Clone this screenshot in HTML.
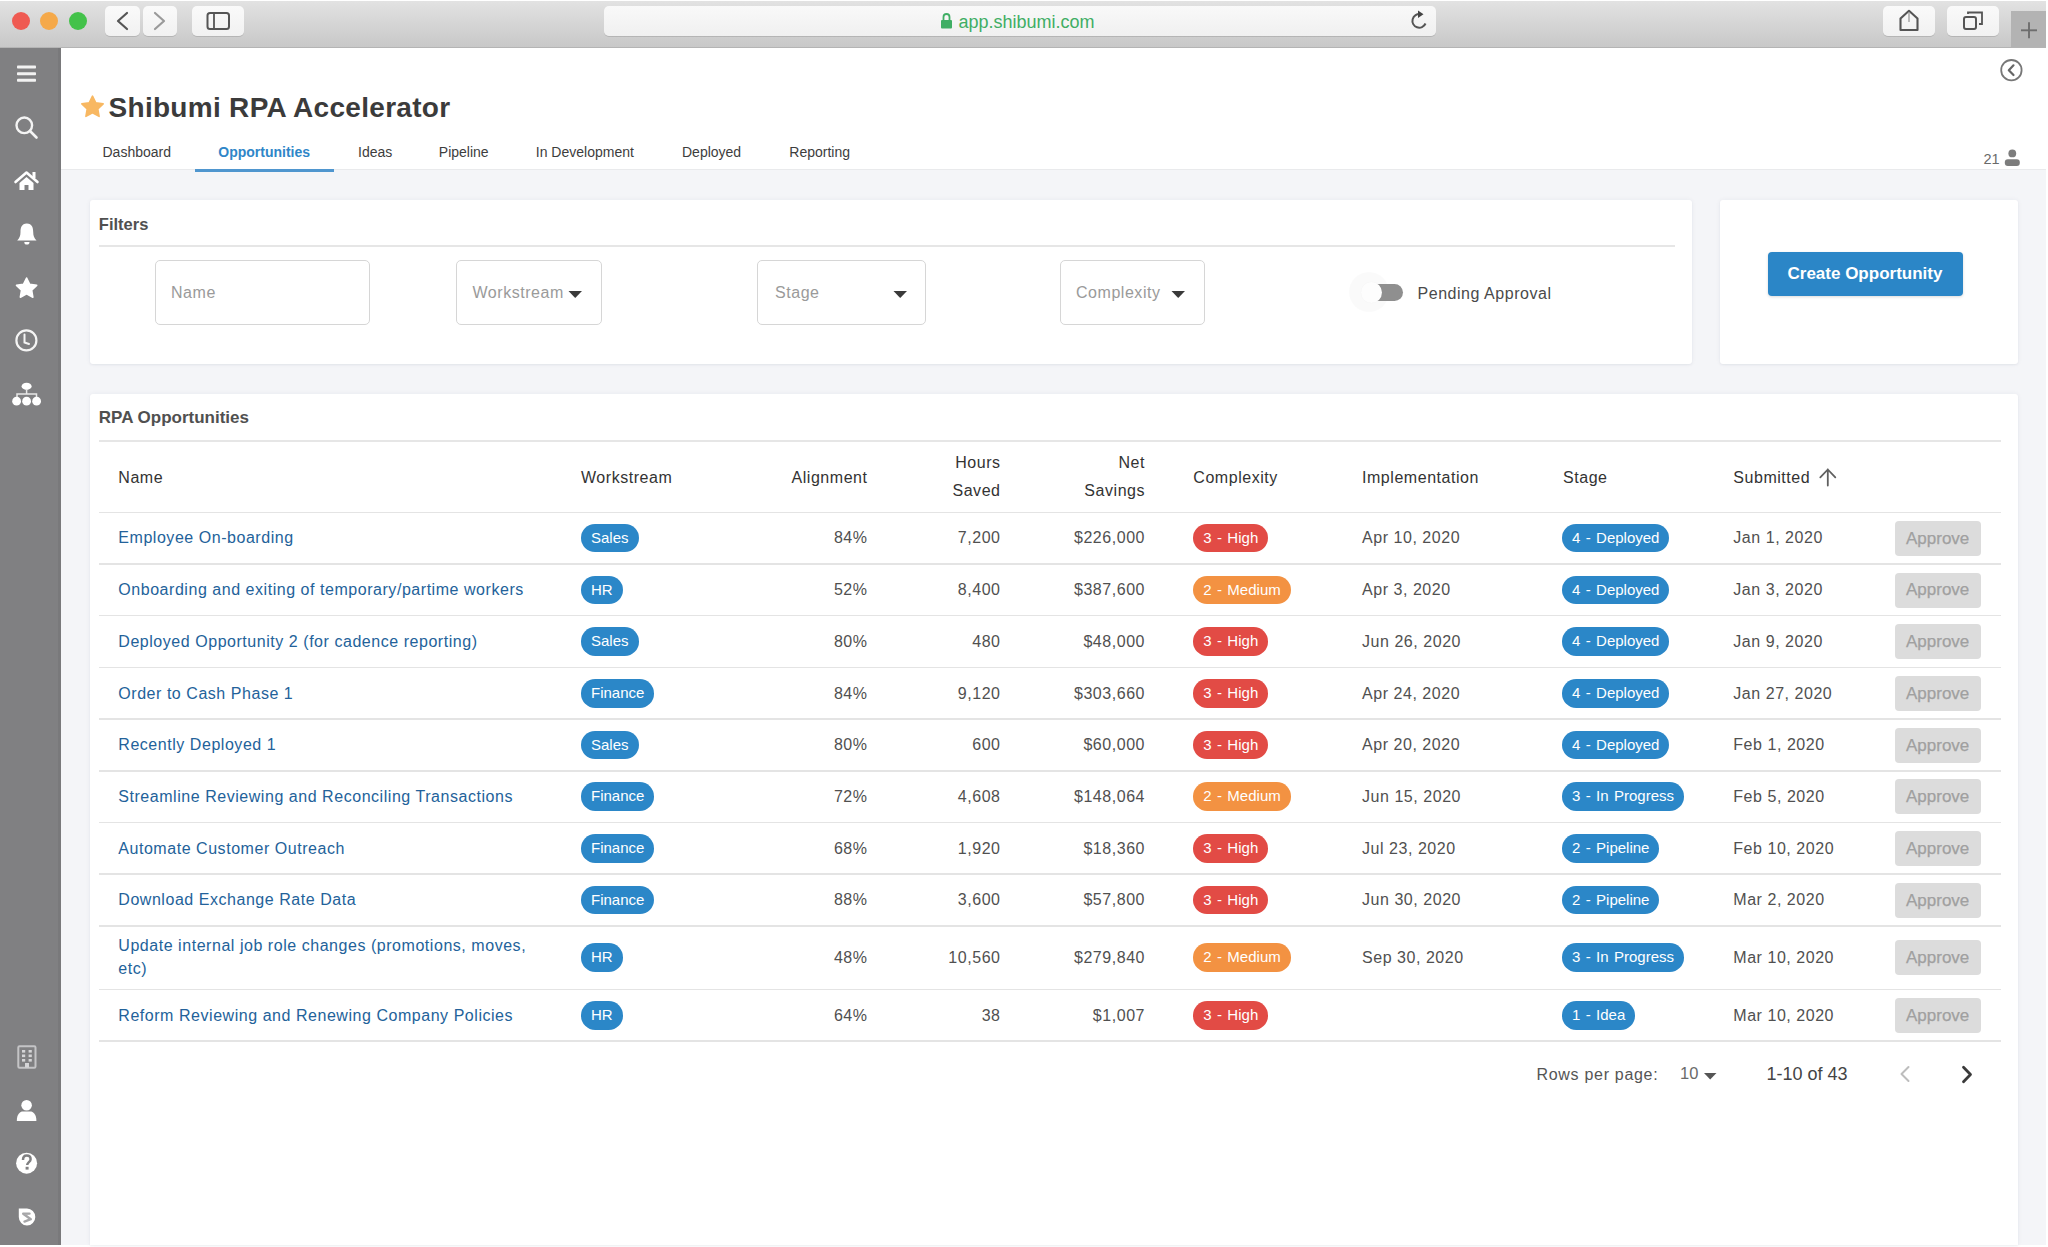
<!DOCTYPE html>
<html><head><meta charset="utf-8">
<style>
*{margin:0;padding:0;box-sizing:border-box}
html,body{width:2048px;height:1247px;overflow:hidden;background:#fff;font-family:"Liberation Sans", sans-serif;}
.a{position:absolute}
.t{position:absolute;white-space:nowrap}
svg{position:absolute;overflow:visible}
</style></head><body>

<div class="a" style="left:0px;top:1px;width:2046px;height:46px;background:linear-gradient(#e2e2e2,#c8c8c8);"></div>
<div class="a" style="left:0px;top:46.5px;width:2046px;height:1.5px;background:#b4b4b4;"></div>
<div class="a" style="left:11.5px;top:12px;width:18px;height:18px;border-radius:50%;background:#ef5a52;"></div>
<div class="a" style="left:40.2px;top:12px;width:18px;height:18px;border-radius:50%;background:#f5a94a;"></div>
<div class="a" style="left:68.8px;top:12px;width:18px;height:18px;border-radius:50%;background:#43c24a;"></div>
<div class="a" style="left:105px;top:6px;width:35px;height:30px;background:linear-gradient(#fafafa,#f1f1f1);border-radius:5px;box-shadow:0 1px 0 rgba(0,0,0,0.12);"></div>
<div class="a" style="left:143px;top:6px;width:34px;height:30px;background:linear-gradient(#fafafa,#f1f1f1);border-radius:5px;box-shadow:0 1px 0 rgba(0,0,0,0.12);"></div>
<div class="a" style="left:192px;top:6px;width:52px;height:30px;background:linear-gradient(#fafafa,#f1f1f1);border-radius:5px;box-shadow:0 1px 0 rgba(0,0,0,0.12);"></div>
<svg style="left:0;top:0" width="2048" height="47"><polyline points="127,13 118,21 127,29" fill="none" stroke="#555" stroke-width="2.2" stroke-linecap="round" stroke-linejoin="round"/><polyline points="155,13 164,21 155,29" fill="none" stroke="#9a9a9a" stroke-width="2.2" stroke-linecap="round" stroke-linejoin="round"/><rect x="207.5" y="13" width="21.5" height="16" rx="2.5" fill="none" stroke="#555" stroke-width="2"/><line x1="214" y1="13" x2="214" y2="29" stroke="#555" stroke-width="1.8"/></svg>
<div class="a" style="left:604px;top:6px;width:832px;height:30px;background:linear-gradient(#f9f9f9,#f0f0f0);border-radius:5px;box-shadow:0 1px 0 rgba(0,0,0,0.12);"></div>
<svg style="left:0;top:0" width="2048" height="47"><path d="M943.5,20 v-3 a3,3 0 0 1 6,0 v3" fill="none" stroke="#3fae64" stroke-width="1.8"/><rect x="941" y="20" width="11" height="8.5" rx="1" fill="#3fae64"/></svg>
<div class="t" style="left:958.50px;top:11.71px;font-size:18px;line-height:20.11px;color:#3fae64;font-weight:normal;">app.shibumi.com</div>
<svg style="left:0;top:0" width="2048" height="47"><path d="M1425.5,23.5 A6.8,6.8 0 1 1 1420.5,14.2" fill="none" stroke="#555" stroke-width="2"/><path d="M1418,10.5 L1423.5,14.2 L1418,18 Z" fill="#444"/></svg>
<div class="a" style="left:1883px;top:6px;width:52px;height:30px;background:linear-gradient(#fafafa,#f1f1f1);border-radius:5px;box-shadow:0 1px 0 rgba(0,0,0,0.12);"></div>
<div class="a" style="left:1947px;top:6px;width:52px;height:30px;background:linear-gradient(#fafafa,#f1f1f1);border-radius:5px;box-shadow:0 1px 0 rgba(0,0,0,0.12);"></div>
<svg style="left:0;top:0" width="2048" height="47"><path d="M1909,10.8 L1900.5,18.5 L1900.5,30 L1917.5,30 L1917.5,18.5 Z" fill="none" stroke="#555" stroke-width="2.1" stroke-linejoin="round"/><line x1="1909" y1="13" x2="1909" y2="22" stroke="#9a9a9a" stroke-width="1.3"/><rect x="1964" y="17" width="12" height="12" rx="2" fill="none" stroke="#555" stroke-width="2"/><path d="M1968,14 L1968,12.5 L1982,12.5 L1982,24 L1979,24" fill="none" stroke="#555" stroke-width="1.8"/></svg>
<div class="a" style="left:2011px;top:11px;width:35px;height:36px;background:#b3b3b3;"></div>
<svg style="left:0;top:0" width="2048" height="47"><line x1="2021" y1="30.3" x2="2037" y2="30.3" stroke="#6e6e6e" stroke-width="1.9"/><line x1="2029" y1="22.3" x2="2029" y2="38.3" stroke="#6e6e6e" stroke-width="1.9"/></svg>
<div class="a" style="left:0px;top:48px;width:61px;height:1197px;background:#808082;"></div>
<div class="a" style="left:58px;top:48px;width:3px;height:1197px;background:#79797b;"></div>
<div class="a" style="left:61px;top:48px;width:1985px;height:122px;background:#fff;"></div>
<div class="a" style="left:61px;top:170px;width:1985px;height:1075px;background:#f4f5f8;"></div>
<div class="a" style="left:61px;top:169px;width:1985px;height:1px;background:#e9eaec;"></div>
<svg style="left:0;top:0" width="60" height="1247"><rect x="17" y="65.5" width="19" height="3" rx="0.8" fill="#f2f2f2"/><rect x="17" y="72.3" width="19" height="3" rx="0.8" fill="#f2f2f2"/><rect x="17" y="78.8" width="19" height="3" rx="0.8" fill="#f2f2f2"/><circle cx="24.3" cy="125.3" r="7.8" fill="none" stroke="#f4f4f4" stroke-width="2.4"/><line x1="30" y1="131" x2="36.5" y2="137.5" stroke="#f4f4f4" stroke-width="2.6" stroke-linecap="round"/><path d="M15.5,182 L26.5,172.5 L37.5,182" fill="none" stroke="#fff" stroke-width="2.6" stroke-linecap="round" stroke-linejoin="round"/><rect x="32.5" y="172" width="3" height="6" fill="#fff"/><path d="M19.5,183 L26.5,177 L33.5,183 L33.5,190 L28.5,190 L28.5,185 L24.5,185 L24.5,190 L19.5,190 Z" fill="#fff"/><path d="M26.8,223.5 C21.5,223.5 20.5,228 20.5,232 C20.5,236 19.5,238 17.2,240.5 L36.5,240.5 C34.2,238 33.2,236 33.2,232 C33.2,228 32.2,223.5 26.8,223.5 Z" fill="#fff"/><path d="M24.3,242 a2.6,2.6 0 0 0 5.2,0 Z" fill="#fff"/><path d="M26.60,278.00 L29.72,284.31 L36.68,285.32 L31.64,290.24 L32.83,297.18 L26.60,293.90 L20.37,297.18 L21.56,290.24 L16.52,285.32 L23.48,284.31 Z" fill="#fff" stroke="#fff" stroke-width="1.6" stroke-linejoin="round"/><circle cx="26.4" cy="340.4" r="10" fill="none" stroke="#f4f4f4" stroke-width="2.2"/><path d="M24.5,334.5 L24.5,342.5 L29,344" fill="none" stroke="#f4f4f4" stroke-width="2" stroke-linecap="round"/><ellipse cx="26.6" cy="386.3" rx="5" ry="3.6" fill="#fff"/><path d="M26.6,389 L26.6,394 M17,398 L17,394 L36.5,394 L36.5,398" fill="none" stroke="#e8e8e8" stroke-width="1.5"/><circle cx="16.6" cy="401.2" r="4.4" fill="#fff"/><circle cx="26.6" cy="401.2" r="4.4" fill="#fff"/><circle cx="36.6" cy="401.2" r="4.4" fill="#fff"/><rect x="18.3" y="1046.3" width="17.2" height="21.5" rx="1.2" fill="none" stroke="#c4c4c6" stroke-width="2"/><g fill="#d4d4d6"><rect x="22" y="1050" width="3.2" height="2.6"/><rect x="28.6" y="1050" width="3.2" height="2.6"/><rect x="22" y="1054.5" width="3.2" height="2.6"/><rect x="28.6" y="1054.5" width="3.2" height="2.6"/><rect x="22" y="1059" width="3.2" height="2.6"/><rect x="28.6" y="1059" width="3.2" height="2.6"/><rect x="25" y="1063" width="4" height="4.5"/></g><circle cx="26.6" cy="1105.3" r="5.3" fill="#fff"/><path d="M16.8,1121 C16.8,1114 20,1111.5 23,1111.5 L30.2,1111.5 C33.2,1111.5 36.4,1114 36.4,1121 Z" fill="#fff"/><circle cx="26.6" cy="1163.2" r="10.5" fill="#fff"/><path d="M23,1160 C23,1156.5 25,1155.5 26.8,1155.5 C29,1155.5 30.6,1157 30.6,1159.2 C30.6,1162 27.2,1162.2 27.2,1165" fill="none" stroke="#808082" stroke-width="2.5"/><rect x="25.6" y="1166.8" width="3" height="2.8" fill="#808082"/><path d="M18.8,1208.4 L27,1208.4 A8.3,8.6 0 0 1 35.3,1217 A8.3,8.6 0 0 1 27,1225.6 A8.2,8.6 0 0 1 18.8,1217 Z" fill="#fff"/><path d="M29.5,1213.6 L23.2,1213.8 L30.8,1219.2 L24.5,1221.6" fill="none" stroke="#a6a6a8" stroke-width="2.4" stroke-linejoin="round" stroke-linecap="round"/></svg>
<svg style="left:0;top:0" width="120" height="130"><path d="M92.50,96.10 L95.79,102.77 L103.15,103.84 L97.83,109.03 L99.08,116.36 L92.50,112.90 L85.92,116.36 L87.17,109.03 L81.85,103.84 L89.21,102.77 Z" fill="#f8b862" stroke="#f8b862" stroke-width="1.6" stroke-linejoin="round"/></svg>
<div class="t" style="left:108.50px;top:92.16px;font-size:28px;line-height:31.28px;color:#3b3b3b;font-weight:bold;letter-spacing:0.3px;">Shibumi RPA Accelerator</div>
<div class="t" style="left:102.50px;top:145.33px;font-size:14px;line-height:15.64px;color:#3d3d3d;font-weight:normal;">Dashboard</div>
<div class="t" style="left:218.30px;top:145.33px;font-size:14px;line-height:15.64px;color:#2f86c8;font-weight:bold;">Opportunities</div>
<div class="t" style="left:358.00px;top:145.33px;font-size:14px;line-height:15.64px;color:#3d3d3d;font-weight:normal;">Ideas</div>
<div class="t" style="left:438.80px;top:145.33px;font-size:14px;line-height:15.64px;color:#3d3d3d;font-weight:normal;">Pipeline</div>
<div class="t" style="left:535.80px;top:145.33px;font-size:14px;line-height:15.64px;color:#3d3d3d;font-weight:normal;">In Development</div>
<div class="t" style="left:682.00px;top:145.33px;font-size:14px;line-height:15.64px;color:#3d3d3d;font-weight:normal;">Deployed</div>
<div class="t" style="left:789.30px;top:145.33px;font-size:14px;line-height:15.64px;color:#3d3d3d;font-weight:normal;">Reporting</div>
<div class="a" style="left:195px;top:168.5px;width:139px;height:3px;background:#4f96cf;"></div>
<svg style="left:0;top:0" width="2048" height="200"><circle cx="2011.4" cy="70.2" r="10.2" fill="none" stroke="#777" stroke-width="1.8"/><polyline points="2013.5,65.3 2008.8,70.2 2013.5,75" fill="none" stroke="#666" stroke-width="2.2" stroke-linecap="round" stroke-linejoin="round"/><circle cx="2012.3" cy="153.4" r="3.9" fill="#7c7c7c"/><rect x="2004.8" y="159.2" width="15" height="6.8" rx="3" fill="#7c7c7c"/></svg>
<div class="t" style="left:1983.50px;top:151.48px;font-size:14.5px;line-height:16.20px;color:#6a6a6a;font-weight:normal;">21</div>
<div class="a" style="left:90px;top:199.5px;width:1602px;height:164px;background:#fff;border-radius:3px;box-shadow:0 0 5px rgba(40,50,80,0.06), 0 1px 2px rgba(40,50,80,0.05);"></div>
<div class="a" style="left:1720px;top:199.5px;width:298px;height:164px;background:#fff;border-radius:3px;box-shadow:0 0 5px rgba(40,50,80,0.06), 0 1px 2px rgba(40,50,80,0.05);"></div>
<div class="t" style="left:98.80px;top:214.57px;font-size:16.5px;line-height:18.43px;color:#505050;font-weight:bold;">Filters</div>
<div class="a" style="left:99px;top:245px;width:1576px;height:1.5px;background:#e6e6e6;"></div>
<div class="a" style="left:154.5px;top:260px;width:215px;height:64.5px;border:1.6px solid #d6d6d6;border-radius:5px;background:#fff;"></div>
<div class="t" style="left:171.00px;top:284.02px;font-size:16px;line-height:17.87px;color:#9a9a9a;font-weight:normal;letter-spacing:0.54px;">Name</div>
<div class="a" style="left:456px;top:260px;width:145.5px;height:64.5px;border:1.6px solid #d6d6d6;border-radius:5px;background:#fff;"></div>
<div class="t" style="left:472.50px;top:284.02px;font-size:16px;line-height:17.87px;color:#9a9a9a;font-weight:normal;letter-spacing:0.54px;">Workstream</div>
<div class="a" style="left:757px;top:260px;width:169px;height:64.5px;border:1.6px solid #d6d6d6;border-radius:5px;background:#fff;"></div>
<div class="t" style="left:775.00px;top:284.02px;font-size:16px;line-height:17.87px;color:#9a9a9a;font-weight:normal;letter-spacing:0.54px;">Stage</div>
<div class="a" style="left:1059.5px;top:260px;width:145.5px;height:64.5px;border:1.6px solid #d6d6d6;border-radius:5px;background:#fff;"></div>
<div class="t" style="left:1076.00px;top:284.02px;font-size:16px;line-height:17.87px;color:#9a9a9a;font-weight:normal;letter-spacing:0.54px;">Complexity</div>
<svg style="left:0;top:0" width="2048" height="400"><path d="M568.5,291 L582,291 L575.2,298 Z" fill="#3a3a3a"/><path d="M893.5,291 L907,291 L900.2,298 Z" fill="#3a3a3a"/><path d="M1171.5,291 L1185,291 L1178.2,298 Z" fill="#3a3a3a"/></svg>
<div class="a" style="left:1349px;top:272px;width:40px;height:40px;border-radius:50%;background:rgba(0,0,0,0.018);"></div>
<div class="a" style="left:1366px;top:283.5px;width:37px;height:17.5px;border-radius:9px;background:#8f8f8f;"></div>
<div class="a" style="left:1361px;top:281.7px;width:21px;height:21px;border-radius:50%;background:#fdfdfd;box-shadow:0 0 1px rgba(0,0,0,0.05);"></div>
<div class="t" style="left:1417.50px;top:284.52px;font-size:16px;line-height:17.87px;color:#4a4a4a;font-weight:normal;letter-spacing:0.54px;">Pending Approval</div>
<div class="a" style="left:1768px;top:252px;width:195px;height:44px;background:#2b86c7;border-radius:4px;box-shadow:0 1px 3px rgba(0,0,0,0.15);"></div>
<div class="t" style="left:1787.50px;top:264.12px;font-size:17px;line-height:18.99px;color:#fff;font-weight:bold;">Create Opportunity</div>
<div class="a" style="left:90px;top:394px;width:1928px;height:851px;background:#fff;border-radius:3px;box-shadow:0 0 5px rgba(40,50,80,0.06), 0 1px 2px rgba(40,50,80,0.05);border-radius:3px 3px 0 0;"></div>
<div class="t" style="left:98.80px;top:408.42px;font-size:17px;line-height:18.99px;color:#505050;font-weight:bold;">RPA Opportunities</div>
<div class="a" style="left:99px;top:440px;width:1902px;height:1.5px;background:#e6e6e6;"></div>
<div class="t" style="left:118.30px;top:468.85px;font-size:16px;line-height:17.87px;color:#333333;font-weight:normal;letter-spacing:0.54px;">Name</div>
<div class="t" style="left:581.00px;top:468.85px;font-size:16px;line-height:17.87px;color:#333333;font-weight:normal;letter-spacing:0.54px;">Workstream</div>
<div class="t" style="right:1180.46px;top:468.85px;font-size:16px;line-height:17.87px;color:#333333;font-weight:normal;letter-spacing:0.54px;">Alignment</div>
<div class="t" style="right:1047.46px;top:453.52px;font-size:16px;line-height:17.87px;color:#333333;font-weight:normal;letter-spacing:0.54px;">Hours</div>
<div class="t" style="right:1047.46px;top:482.22px;font-size:16px;line-height:17.87px;color:#333333;font-weight:normal;letter-spacing:0.54px;">Saved</div>
<div class="t" style="right:902.96px;top:453.52px;font-size:16px;line-height:17.87px;color:#333333;font-weight:normal;letter-spacing:0.54px;">Net</div>
<div class="t" style="right:902.96px;top:482.22px;font-size:16px;line-height:17.87px;color:#333333;font-weight:normal;letter-spacing:0.54px;">Savings</div>
<div class="t" style="left:1193.30px;top:468.85px;font-size:16px;line-height:17.87px;color:#333333;font-weight:normal;letter-spacing:0.54px;">Complexity</div>
<div class="t" style="left:1362.00px;top:468.85px;font-size:16px;line-height:17.87px;color:#333333;font-weight:normal;letter-spacing:0.54px;">Implementation</div>
<div class="t" style="left:1563.00px;top:468.85px;font-size:16px;line-height:17.87px;color:#333333;font-weight:normal;letter-spacing:0.54px;">Stage</div>
<div class="t" style="left:1733.30px;top:468.85px;font-size:16px;line-height:17.87px;color:#333333;font-weight:normal;letter-spacing:0.54px;">Submitted</div>
<svg style="left:0;top:0" width="2048" height="600"><path d="M1827.8,485.5 L1827.8,469.5 M1820.3,477.3 L1827.8,469.5 L1835.3,477.3" fill="none" stroke="#606060" stroke-width="1.8" stroke-linecap="round" stroke-linejoin="round"/></svg>
<div class="a" style="left:99px;top:511.5px;width:1902px;height:1.5px;background:#e4e4e4;"></div>
<div class="a" style="left:99px;top:563.2px;width:1902px;height:1.5px;background:#e4e4e4;"></div>
<div class="a" style="left:99px;top:614.9px;width:1902px;height:1.5px;background:#e4e4e4;"></div>
<div class="a" style="left:99px;top:666.6px;width:1902px;height:1.5px;background:#e4e4e4;"></div>
<div class="a" style="left:99px;top:718.3px;width:1902px;height:1.5px;background:#e4e4e4;"></div>
<div class="a" style="left:99px;top:770.0px;width:1902px;height:1.5px;background:#e4e4e4;"></div>
<div class="a" style="left:99px;top:821.7px;width:1902px;height:1.5px;background:#e4e4e4;"></div>
<div class="a" style="left:99px;top:873.4px;width:1902px;height:1.5px;background:#e4e4e4;"></div>
<div class="a" style="left:99px;top:925.1px;width:1902px;height:1.5px;background:#e4e4e4;"></div>
<div class="a" style="left:99px;top:988.6px;width:1902px;height:1.5px;background:#e4e4e4;"></div>
<div class="a" style="left:99px;top:1040.3px;width:1902px;height:1.5px;background:#e4e4e4;"></div>
<div class="t" style="left:118.30px;top:529.40px;font-size:16px;line-height:17.87px;color:#23629a;font-weight:normal;letter-spacing:0.54px;">Employee On-boarding</div>
<div style="position:absolute;height:28.5px;border-radius:14.25px;color:#fff;font-size:15px;line-height:28.5px;padding:0 10px;white-space:nowrap;word-spacing:1.2px;left:581px;top:523.90px;background:#2b87c8;">Sales</div>
<div class="t" style="right:1180.46px;top:529.40px;font-size:16px;line-height:17.87px;color:#505050;font-weight:normal;letter-spacing:0.54px;">84%</div>
<div class="t" style="right:1047.46px;top:529.40px;font-size:16px;line-height:17.87px;color:#505050;font-weight:normal;letter-spacing:0.54px;">7,200</div>
<div class="t" style="right:902.96px;top:529.40px;font-size:16px;line-height:17.87px;color:#505050;font-weight:normal;letter-spacing:0.54px;">$226,000</div>
<div style="position:absolute;height:28.5px;border-radius:14.25px;color:#fff;font-size:15px;line-height:28.5px;padding:0 10px;white-space:nowrap;word-spacing:1.2px;left:1193.3px;top:523.90px;background:#e24b45;">3 - High</div>
<div class="t" style="left:1362.00px;top:529.40px;font-size:16px;line-height:17.87px;color:#505050;font-weight:normal;letter-spacing:0.54px;">Apr 10, 2020</div>
<div style="position:absolute;height:28.5px;border-radius:14.25px;color:#fff;font-size:15px;line-height:28.5px;padding:0 10px;white-space:nowrap;word-spacing:1.2px;left:1562px;top:523.90px;background:#2b87c8;">4 - Deployed</div>
<div class="t" style="left:1733.30px;top:529.40px;font-size:16px;line-height:17.87px;color:#505050;font-weight:normal;letter-spacing:0.54px;">Jan 1, 2020</div>
<div class="a" style="left:1895px;top:520.95px;width:86px;height:35px;background:#dcdcdc;border-radius:4px;"></div>
<div class="t" style="left:1906.00px;top:528.79px;font-size:17px;line-height:18.99px;color:#a0a0a0;font-weight:normal;-webkit-text-stroke:0.25px #a0a0a0;">Approve</div>
<div class="t" style="left:118.30px;top:581.10px;font-size:16px;line-height:17.87px;color:#23629a;font-weight:normal;letter-spacing:0.54px;">Onboarding and exiting of temporary/partime workers</div>
<div style="position:absolute;height:28.5px;border-radius:14.25px;color:#fff;font-size:15px;line-height:28.5px;padding:0 10px;white-space:nowrap;word-spacing:1.2px;left:581px;top:575.60px;background:#2b87c8;">HR</div>
<div class="t" style="right:1180.46px;top:581.10px;font-size:16px;line-height:17.87px;color:#505050;font-weight:normal;letter-spacing:0.54px;">52%</div>
<div class="t" style="right:1047.46px;top:581.10px;font-size:16px;line-height:17.87px;color:#505050;font-weight:normal;letter-spacing:0.54px;">8,400</div>
<div class="t" style="right:902.96px;top:581.10px;font-size:16px;line-height:17.87px;color:#505050;font-weight:normal;letter-spacing:0.54px;">$387,600</div>
<div style="position:absolute;height:28.5px;border-radius:14.25px;color:#fff;font-size:15px;line-height:28.5px;padding:0 10px;white-space:nowrap;word-spacing:1.2px;left:1193.3px;top:575.60px;background:#f39242;">2 - Medium</div>
<div class="t" style="left:1362.00px;top:581.10px;font-size:16px;line-height:17.87px;color:#505050;font-weight:normal;letter-spacing:0.54px;">Apr 3, 2020</div>
<div style="position:absolute;height:28.5px;border-radius:14.25px;color:#fff;font-size:15px;line-height:28.5px;padding:0 10px;white-space:nowrap;word-spacing:1.2px;left:1562px;top:575.60px;background:#2b87c8;">4 - Deployed</div>
<div class="t" style="left:1733.30px;top:581.10px;font-size:16px;line-height:17.87px;color:#505050;font-weight:normal;letter-spacing:0.54px;">Jan 3, 2020</div>
<div class="a" style="left:1895px;top:572.65px;width:86px;height:35px;background:#dcdcdc;border-radius:4px;"></div>
<div class="t" style="left:1906.00px;top:580.49px;font-size:17px;line-height:18.99px;color:#a0a0a0;font-weight:normal;-webkit-text-stroke:0.25px #a0a0a0;">Approve</div>
<div class="t" style="left:118.30px;top:632.80px;font-size:16px;line-height:17.87px;color:#23629a;font-weight:normal;letter-spacing:0.54px;">Deployed Opportunity 2 (for cadence reporting)</div>
<div style="position:absolute;height:28.5px;border-radius:14.25px;color:#fff;font-size:15px;line-height:28.5px;padding:0 10px;white-space:nowrap;word-spacing:1.2px;left:581px;top:627.30px;background:#2b87c8;">Sales</div>
<div class="t" style="right:1180.46px;top:632.80px;font-size:16px;line-height:17.87px;color:#505050;font-weight:normal;letter-spacing:0.54px;">80%</div>
<div class="t" style="right:1047.46px;top:632.80px;font-size:16px;line-height:17.87px;color:#505050;font-weight:normal;letter-spacing:0.54px;">480</div>
<div class="t" style="right:902.96px;top:632.80px;font-size:16px;line-height:17.87px;color:#505050;font-weight:normal;letter-spacing:0.54px;">$48,000</div>
<div style="position:absolute;height:28.5px;border-radius:14.25px;color:#fff;font-size:15px;line-height:28.5px;padding:0 10px;white-space:nowrap;word-spacing:1.2px;left:1193.3px;top:627.30px;background:#e24b45;">3 - High</div>
<div class="t" style="left:1362.00px;top:632.80px;font-size:16px;line-height:17.87px;color:#505050;font-weight:normal;letter-spacing:0.54px;">Jun 26, 2020</div>
<div style="position:absolute;height:28.5px;border-radius:14.25px;color:#fff;font-size:15px;line-height:28.5px;padding:0 10px;white-space:nowrap;word-spacing:1.2px;left:1562px;top:627.30px;background:#2b87c8;">4 - Deployed</div>
<div class="t" style="left:1733.30px;top:632.80px;font-size:16px;line-height:17.87px;color:#505050;font-weight:normal;letter-spacing:0.54px;">Jan 9, 2020</div>
<div class="a" style="left:1895px;top:624.35px;width:86px;height:35px;background:#dcdcdc;border-radius:4px;"></div>
<div class="t" style="left:1906.00px;top:632.19px;font-size:17px;line-height:18.99px;color:#a0a0a0;font-weight:normal;-webkit-text-stroke:0.25px #a0a0a0;">Approve</div>
<div class="t" style="left:118.30px;top:684.50px;font-size:16px;line-height:17.87px;color:#23629a;font-weight:normal;letter-spacing:0.54px;">Order to Cash Phase 1</div>
<div style="position:absolute;height:28.5px;border-radius:14.25px;color:#fff;font-size:15px;line-height:28.5px;padding:0 10px;white-space:nowrap;word-spacing:1.2px;left:581px;top:679.00px;background:#2b87c8;">Finance</div>
<div class="t" style="right:1180.46px;top:684.50px;font-size:16px;line-height:17.87px;color:#505050;font-weight:normal;letter-spacing:0.54px;">84%</div>
<div class="t" style="right:1047.46px;top:684.50px;font-size:16px;line-height:17.87px;color:#505050;font-weight:normal;letter-spacing:0.54px;">9,120</div>
<div class="t" style="right:902.96px;top:684.50px;font-size:16px;line-height:17.87px;color:#505050;font-weight:normal;letter-spacing:0.54px;">$303,660</div>
<div style="position:absolute;height:28.5px;border-radius:14.25px;color:#fff;font-size:15px;line-height:28.5px;padding:0 10px;white-space:nowrap;word-spacing:1.2px;left:1193.3px;top:679.00px;background:#e24b45;">3 - High</div>
<div class="t" style="left:1362.00px;top:684.50px;font-size:16px;line-height:17.87px;color:#505050;font-weight:normal;letter-spacing:0.54px;">Apr 24, 2020</div>
<div style="position:absolute;height:28.5px;border-radius:14.25px;color:#fff;font-size:15px;line-height:28.5px;padding:0 10px;white-space:nowrap;word-spacing:1.2px;left:1562px;top:679.00px;background:#2b87c8;">4 - Deployed</div>
<div class="t" style="left:1733.30px;top:684.50px;font-size:16px;line-height:17.87px;color:#505050;font-weight:normal;letter-spacing:0.54px;">Jan 27, 2020</div>
<div class="a" style="left:1895px;top:676.05px;width:86px;height:35px;background:#dcdcdc;border-radius:4px;"></div>
<div class="t" style="left:1906.00px;top:683.89px;font-size:17px;line-height:18.99px;color:#a0a0a0;font-weight:normal;-webkit-text-stroke:0.25px #a0a0a0;">Approve</div>
<div class="t" style="left:118.30px;top:736.20px;font-size:16px;line-height:17.87px;color:#23629a;font-weight:normal;letter-spacing:0.54px;">Recently Deployed 1</div>
<div style="position:absolute;height:28.5px;border-radius:14.25px;color:#fff;font-size:15px;line-height:28.5px;padding:0 10px;white-space:nowrap;word-spacing:1.2px;left:581px;top:730.70px;background:#2b87c8;">Sales</div>
<div class="t" style="right:1180.46px;top:736.20px;font-size:16px;line-height:17.87px;color:#505050;font-weight:normal;letter-spacing:0.54px;">80%</div>
<div class="t" style="right:1047.46px;top:736.20px;font-size:16px;line-height:17.87px;color:#505050;font-weight:normal;letter-spacing:0.54px;">600</div>
<div class="t" style="right:902.96px;top:736.20px;font-size:16px;line-height:17.87px;color:#505050;font-weight:normal;letter-spacing:0.54px;">$60,000</div>
<div style="position:absolute;height:28.5px;border-radius:14.25px;color:#fff;font-size:15px;line-height:28.5px;padding:0 10px;white-space:nowrap;word-spacing:1.2px;left:1193.3px;top:730.70px;background:#e24b45;">3 - High</div>
<div class="t" style="left:1362.00px;top:736.20px;font-size:16px;line-height:17.87px;color:#505050;font-weight:normal;letter-spacing:0.54px;">Apr 20, 2020</div>
<div style="position:absolute;height:28.5px;border-radius:14.25px;color:#fff;font-size:15px;line-height:28.5px;padding:0 10px;white-space:nowrap;word-spacing:1.2px;left:1562px;top:730.70px;background:#2b87c8;">4 - Deployed</div>
<div class="t" style="left:1733.30px;top:736.20px;font-size:16px;line-height:17.87px;color:#505050;font-weight:normal;letter-spacing:0.54px;">Feb 1, 2020</div>
<div class="a" style="left:1895px;top:727.75px;width:86px;height:35px;background:#dcdcdc;border-radius:4px;"></div>
<div class="t" style="left:1906.00px;top:735.59px;font-size:17px;line-height:18.99px;color:#a0a0a0;font-weight:normal;-webkit-text-stroke:0.25px #a0a0a0;">Approve</div>
<div class="t" style="left:118.30px;top:787.90px;font-size:16px;line-height:17.87px;color:#23629a;font-weight:normal;letter-spacing:0.54px;">Streamline Reviewing and Reconciling Transactions</div>
<div style="position:absolute;height:28.5px;border-radius:14.25px;color:#fff;font-size:15px;line-height:28.5px;padding:0 10px;white-space:nowrap;word-spacing:1.2px;left:581px;top:782.40px;background:#2b87c8;">Finance</div>
<div class="t" style="right:1180.46px;top:787.90px;font-size:16px;line-height:17.87px;color:#505050;font-weight:normal;letter-spacing:0.54px;">72%</div>
<div class="t" style="right:1047.46px;top:787.90px;font-size:16px;line-height:17.87px;color:#505050;font-weight:normal;letter-spacing:0.54px;">4,608</div>
<div class="t" style="right:902.96px;top:787.90px;font-size:16px;line-height:17.87px;color:#505050;font-weight:normal;letter-spacing:0.54px;">$148,064</div>
<div style="position:absolute;height:28.5px;border-radius:14.25px;color:#fff;font-size:15px;line-height:28.5px;padding:0 10px;white-space:nowrap;word-spacing:1.2px;left:1193.3px;top:782.40px;background:#f39242;">2 - Medium</div>
<div class="t" style="left:1362.00px;top:787.90px;font-size:16px;line-height:17.87px;color:#505050;font-weight:normal;letter-spacing:0.54px;">Jun 15, 2020</div>
<div style="position:absolute;height:28.5px;border-radius:14.25px;color:#fff;font-size:15px;line-height:28.5px;padding:0 10px;white-space:nowrap;word-spacing:1.2px;left:1562px;top:782.40px;background:#2b87c8;">3 - In Progress</div>
<div class="t" style="left:1733.30px;top:787.90px;font-size:16px;line-height:17.87px;color:#505050;font-weight:normal;letter-spacing:0.54px;">Feb 5, 2020</div>
<div class="a" style="left:1895px;top:779.45px;width:86px;height:35px;background:#dcdcdc;border-radius:4px;"></div>
<div class="t" style="left:1906.00px;top:787.29px;font-size:17px;line-height:18.99px;color:#a0a0a0;font-weight:normal;-webkit-text-stroke:0.25px #a0a0a0;">Approve</div>
<div class="t" style="left:118.30px;top:839.60px;font-size:16px;line-height:17.87px;color:#23629a;font-weight:normal;letter-spacing:0.54px;">Automate Customer Outreach</div>
<div style="position:absolute;height:28.5px;border-radius:14.25px;color:#fff;font-size:15px;line-height:28.5px;padding:0 10px;white-space:nowrap;word-spacing:1.2px;left:581px;top:834.10px;background:#2b87c8;">Finance</div>
<div class="t" style="right:1180.46px;top:839.60px;font-size:16px;line-height:17.87px;color:#505050;font-weight:normal;letter-spacing:0.54px;">68%</div>
<div class="t" style="right:1047.46px;top:839.60px;font-size:16px;line-height:17.87px;color:#505050;font-weight:normal;letter-spacing:0.54px;">1,920</div>
<div class="t" style="right:902.96px;top:839.60px;font-size:16px;line-height:17.87px;color:#505050;font-weight:normal;letter-spacing:0.54px;">$18,360</div>
<div style="position:absolute;height:28.5px;border-radius:14.25px;color:#fff;font-size:15px;line-height:28.5px;padding:0 10px;white-space:nowrap;word-spacing:1.2px;left:1193.3px;top:834.10px;background:#e24b45;">3 - High</div>
<div class="t" style="left:1362.00px;top:839.60px;font-size:16px;line-height:17.87px;color:#505050;font-weight:normal;letter-spacing:0.54px;">Jul 23, 2020</div>
<div style="position:absolute;height:28.5px;border-radius:14.25px;color:#fff;font-size:15px;line-height:28.5px;padding:0 10px;white-space:nowrap;word-spacing:1.2px;left:1562px;top:834.10px;background:#2b87c8;">2 - Pipeline</div>
<div class="t" style="left:1733.30px;top:839.60px;font-size:16px;line-height:17.87px;color:#505050;font-weight:normal;letter-spacing:0.54px;">Feb 10, 2020</div>
<div class="a" style="left:1895px;top:831.15px;width:86px;height:35px;background:#dcdcdc;border-radius:4px;"></div>
<div class="t" style="left:1906.00px;top:838.99px;font-size:17px;line-height:18.99px;color:#a0a0a0;font-weight:normal;-webkit-text-stroke:0.25px #a0a0a0;">Approve</div>
<div class="t" style="left:118.30px;top:891.30px;font-size:16px;line-height:17.87px;color:#23629a;font-weight:normal;letter-spacing:0.54px;">Download Exchange Rate Data</div>
<div style="position:absolute;height:28.5px;border-radius:14.25px;color:#fff;font-size:15px;line-height:28.5px;padding:0 10px;white-space:nowrap;word-spacing:1.2px;left:581px;top:885.80px;background:#2b87c8;">Finance</div>
<div class="t" style="right:1180.46px;top:891.30px;font-size:16px;line-height:17.87px;color:#505050;font-weight:normal;letter-spacing:0.54px;">88%</div>
<div class="t" style="right:1047.46px;top:891.30px;font-size:16px;line-height:17.87px;color:#505050;font-weight:normal;letter-spacing:0.54px;">3,600</div>
<div class="t" style="right:902.96px;top:891.30px;font-size:16px;line-height:17.87px;color:#505050;font-weight:normal;letter-spacing:0.54px;">$57,800</div>
<div style="position:absolute;height:28.5px;border-radius:14.25px;color:#fff;font-size:15px;line-height:28.5px;padding:0 10px;white-space:nowrap;word-spacing:1.2px;left:1193.3px;top:885.80px;background:#e24b45;">3 - High</div>
<div class="t" style="left:1362.00px;top:891.30px;font-size:16px;line-height:17.87px;color:#505050;font-weight:normal;letter-spacing:0.54px;">Jun 30, 2020</div>
<div style="position:absolute;height:28.5px;border-radius:14.25px;color:#fff;font-size:15px;line-height:28.5px;padding:0 10px;white-space:nowrap;word-spacing:1.2px;left:1562px;top:885.80px;background:#2b87c8;">2 - Pipeline</div>
<div class="t" style="left:1733.30px;top:891.30px;font-size:16px;line-height:17.87px;color:#505050;font-weight:normal;letter-spacing:0.54px;">Mar 2, 2020</div>
<div class="a" style="left:1895px;top:882.85px;width:86px;height:35px;background:#dcdcdc;border-radius:4px;"></div>
<div class="t" style="left:1906.00px;top:890.69px;font-size:17px;line-height:18.99px;color:#a0a0a0;font-weight:normal;-webkit-text-stroke:0.25px #a0a0a0;">Approve</div>
<div class="t" style="left:118.30px;top:937.02px;font-size:16px;line-height:17.87px;color:#23629a;font-weight:normal;letter-spacing:0.54px;">Update internal job role changes (promotions, moves,</div>
<div class="t" style="left:118.30px;top:960.02px;font-size:16px;line-height:17.87px;color:#23629a;font-weight:normal;letter-spacing:0.54px;">etc)</div>
<div style="position:absolute;height:28.5px;border-radius:14.25px;color:#fff;font-size:15px;line-height:28.5px;padding:0 10px;white-space:nowrap;word-spacing:1.2px;left:581px;top:943.40px;background:#2b87c8;">HR</div>
<div class="t" style="right:1180.46px;top:948.90px;font-size:16px;line-height:17.87px;color:#505050;font-weight:normal;letter-spacing:0.54px;">48%</div>
<div class="t" style="right:1047.46px;top:948.90px;font-size:16px;line-height:17.87px;color:#505050;font-weight:normal;letter-spacing:0.54px;">10,560</div>
<div class="t" style="right:902.96px;top:948.90px;font-size:16px;line-height:17.87px;color:#505050;font-weight:normal;letter-spacing:0.54px;">$279,840</div>
<div style="position:absolute;height:28.5px;border-radius:14.25px;color:#fff;font-size:15px;line-height:28.5px;padding:0 10px;white-space:nowrap;word-spacing:1.2px;left:1193.3px;top:943.40px;background:#f39242;">2 - Medium</div>
<div class="t" style="left:1362.00px;top:948.90px;font-size:16px;line-height:17.87px;color:#505050;font-weight:normal;letter-spacing:0.54px;">Sep 30, 2020</div>
<div style="position:absolute;height:28.5px;border-radius:14.25px;color:#fff;font-size:15px;line-height:28.5px;padding:0 10px;white-space:nowrap;word-spacing:1.2px;left:1562px;top:943.40px;background:#2b87c8;">3 - In Progress</div>
<div class="t" style="left:1733.30px;top:948.90px;font-size:16px;line-height:17.87px;color:#505050;font-weight:normal;letter-spacing:0.54px;">Mar 10, 2020</div>
<div class="a" style="left:1895px;top:940.45px;width:86px;height:35px;background:#dcdcdc;border-radius:4px;"></div>
<div class="t" style="left:1906.00px;top:948.29px;font-size:17px;line-height:18.99px;color:#a0a0a0;font-weight:normal;-webkit-text-stroke:0.25px #a0a0a0;">Approve</div>
<div class="t" style="left:118.30px;top:1006.50px;font-size:16px;line-height:17.87px;color:#23629a;font-weight:normal;letter-spacing:0.54px;">Reform Reviewing and Renewing Company Policies</div>
<div style="position:absolute;height:28.5px;border-radius:14.25px;color:#fff;font-size:15px;line-height:28.5px;padding:0 10px;white-space:nowrap;word-spacing:1.2px;left:581px;top:1001.00px;background:#2b87c8;">HR</div>
<div class="t" style="right:1180.46px;top:1006.50px;font-size:16px;line-height:17.87px;color:#505050;font-weight:normal;letter-spacing:0.54px;">64%</div>
<div class="t" style="right:1047.46px;top:1006.50px;font-size:16px;line-height:17.87px;color:#505050;font-weight:normal;letter-spacing:0.54px;">38</div>
<div class="t" style="right:902.96px;top:1006.50px;font-size:16px;line-height:17.87px;color:#505050;font-weight:normal;letter-spacing:0.54px;">$1,007</div>
<div style="position:absolute;height:28.5px;border-radius:14.25px;color:#fff;font-size:15px;line-height:28.5px;padding:0 10px;white-space:nowrap;word-spacing:1.2px;left:1193.3px;top:1001.00px;background:#e24b45;">3 - High</div>
<div style="position:absolute;height:28.5px;border-radius:14.25px;color:#fff;font-size:15px;line-height:28.5px;padding:0 10px;white-space:nowrap;word-spacing:1.2px;left:1562px;top:1001.00px;background:#2b87c8;">1 - Idea</div>
<div class="t" style="left:1733.30px;top:1006.50px;font-size:16px;line-height:17.87px;color:#505050;font-weight:normal;letter-spacing:0.54px;">Mar 10, 2020</div>
<div class="a" style="left:1895px;top:998.05px;width:86px;height:35px;background:#dcdcdc;border-radius:4px;"></div>
<div class="t" style="left:1906.00px;top:1005.89px;font-size:17px;line-height:18.99px;color:#a0a0a0;font-weight:normal;-webkit-text-stroke:0.25px #a0a0a0;">Approve</div>
<div class="t" style="left:1536.50px;top:1066.02px;font-size:16px;line-height:17.87px;color:#555;font-weight:normal;letter-spacing:0.7px;">Rows per page:</div>
<div class="t" style="left:1680.00px;top:1063.67px;font-size:16.5px;line-height:18.43px;color:#6a6a6a;font-weight:normal;">10</div>
<div class="t" style="left:1766.50px;top:1064.21px;font-size:18px;line-height:20.11px;color:#444;font-weight:normal;">1-10 of 43</div>
<svg style="left:0;top:0" width="2048" height="1247"><path d="M1704,1073 L1716.5,1073 L1710.2,1079.5 Z" fill="#555"/><polyline points="1908.5,1067 1901.5,1074 1908.5,1081" fill="none" stroke="#bdbdbd" stroke-width="2" stroke-linecap="round" stroke-linejoin="round"/><polyline points="1963.5,1067.3 1970.5,1074.5 1963.5,1081.7" fill="none" stroke="#3a3a3a" stroke-width="2.8" stroke-linecap="round" stroke-linejoin="round"/></svg>
</body></html>
